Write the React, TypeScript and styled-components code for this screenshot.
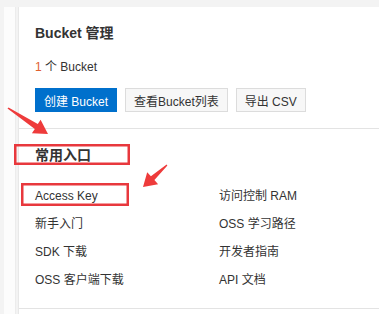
import React from "react";
import styled, { createGlobalStyle } from "styled-components";

const GlobalStyle = createGlobalStyle`
  html, body {
    margin: 0;
    padding: 0;
    background: #f3f3f3;
    font-family: "Liberation Sans", "Noto Sans CJK SC", sans-serif;
    font-size: 12px;
    color: #333;
  }
`;

const Page = styled.div`
  position: relative;
  display: flex;
  padding-top: 7px;
  height: 314px;
  box-sizing: border-box;
  overflow: hidden;
`;

const SideBar = styled.div`
  width: 11px;
  margin-left: 4px;
  margin-right: 2px;
  background: #fcfcfc;
  border-right: 1px solid #ececec;
`;

const Card = styled.div`
  flex: 1;
  background: #fff;
  border-left: 1px solid #e8e8e8;
`;

const Section = styled.div<{ $bottom: number }>`
  position: relative;
  padding: 16px 0 ${(p) => p.$bottom}px 16px;
  border-bottom: 1px solid #e3e3e3;
`;

const Title = styled.div`
  font-size: 14px;
  font-weight: bold;
  line-height: 20px;
  color: #333;
`;

const Count = styled.div`
  margin-top: 15px;
  line-height: 18px;
`;

const Num = styled.span`
  color: #e0602e;
`;

const Buttons = styled.div`
  display: flex;
  gap: 8px;
  margin-top: 12px;
`;

const Button = styled.button<{ $primary?: boolean }>`
  height: 24px;
  padding: 0 8px;
  font-family: inherit;
  font-size: 12px;
  color: ${(p) => (p.$primary ? "#fff" : "#333")};
  background: ${(p) => (p.$primary ? "#0070cc" : "#f7f7f7")};
  border: 1px solid ${(p) => (p.$primary ? "#0070cc" : "#dcdcdc")};
  border-radius: 0;
  cursor: pointer;
`;

const Links = styled.div`
  display: grid;
  grid-template-columns: 184px 1fr;
  margin-top: 17px;
`;

const LinkItem = styled.a`
  line-height: 28px;
  color: #333;
  text-decoration: none;
`;

const Marks = styled.svg`
  position: absolute;
  left: 0;
  top: 0;
  pointer-events: none;
`;

const links = [
  "Access Key",
  "访问控制 RAM",
  "新手入门",
  "OSS 学习路径",
  "SDK 下载",
  "开发者指南",
  "OSS 客户端下载",
  "API 文档",
];

function App() {
  return (
    <>
      <GlobalStyle />
      <Page>
        <SideBar />
        <Card>
          <Section $bottom={16}>
            <Title>Bucket 管理</Title>
            <Count>
              <Num>1</Num> 个 Bucket
            </Count>
            <Buttons>
              <Button $primary>创建 Bucket</Button>
              <Button>查看Bucket列表</Button>
              <Button>导出 CSV</Button>
            </Buttons>
          </Section>
          <Section $bottom={14}>
            <Title>常用入口</Title>
            <Links>
              {links.map((l) => (
                <LinkItem key={l} href="#">
                  {l}
                </LinkItem>
              ))}
            </Links>
          </Section>
        </Card>
        {/* red annotation marks drawn over the screenshot */}
        <Marks width="379" height="314" viewBox="0 0 379 314">
          <g fill="none" stroke="#e8383d" strokeWidth="2.5">
            <rect x="15.25" y="145.25" width="113.5" height="18.5" />
            <rect x="22.25" y="184.25" width="105.5" height="20.5" />
          </g>
          <g fill="#ee3b3b">
            <polygon points="7.5,108.6 34.8,128.9 31.9,133.2 48,134 40.6,119.7 37.8,124 8.5,107.4" />
            <polygon points="166.6,164.4 150.9,176.3 147.2,172.3 143,187 158.1,184.2 154.4,180.1 167.4,165.6" />
          </g>
        </Marks>
      </Page>
    </>
  );
}

export default App;
